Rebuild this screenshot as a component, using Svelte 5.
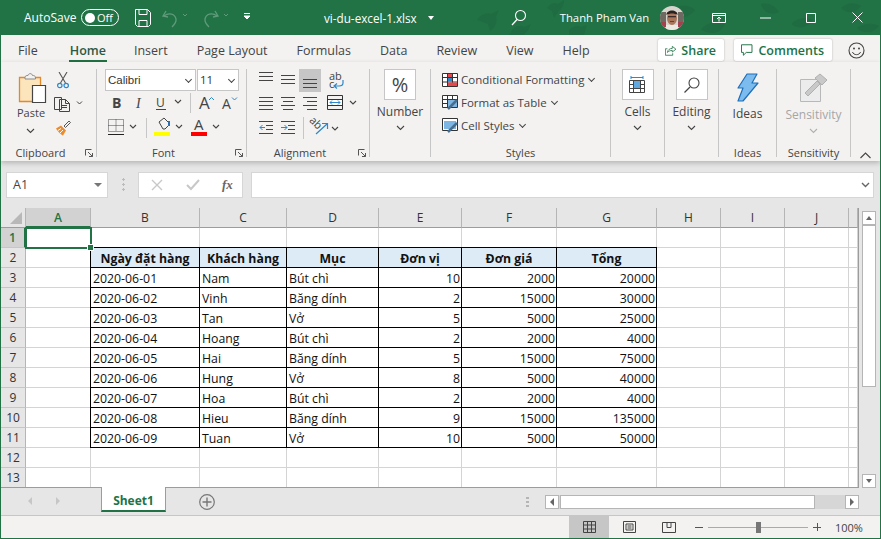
<script>
  const tabs = ['File', 'Home', 'Insert', 'Page Layout', 'Formulas', 'Data', 'Review', 'View', 'Help'];
  const columns = [
    { name: 'A', w: 65 }, { name: 'B', w: 109 }, { name: 'C', w: 87 }, { name: 'D', w: 92 },
    { name: 'E', w: 83 }, { name: 'F', w: 95 }, { name: 'G', w: 100 }, { name: 'H', w: 64 },
    { name: 'I', w: 64 }, { name: 'J', w: 64 }, { name: '', w: 9 }
  ];
  const headings = ['Ngày đặt hàng', 'Khách hàng', 'Mục', 'Đơn vị', 'Đơn giá', 'Tổng'];
  const orders = [
    ['2020-06-01', 'Nam', 'Bút chì', 10, 2000, 20000],
    ['2020-06-02', 'Vinh', 'Băng dính', 2, 15000, 30000],
    ['2020-06-03', 'Tan', 'Vở', 5, 5000, 25000],
    ['2020-06-04', 'Hoang', 'Bút chì', 2, 2000, 4000],
    ['2020-06-05', 'Hai', 'Băng dính', 5, 15000, 75000],
    ['2020-06-06', 'Hung', 'Vở', 8, 5000, 40000],
    ['2020-06-07', 'Hoa', 'Bút chì', 2, 2000, 4000],
    ['2020-06-08', 'Hieu', 'Băng dính', 9, 15000, 135000],
    ['2020-06-09', 'Tuan', 'Vở', 10, 5000, 50000]
  ];
  const gridCols = '25px ' + columns.map((c) => c.w + 'px').join(' ');
  const rows = Array.from({ length: 13 }, (_, i) => i + 1);
  const lines = (ys, x1, x2) => ys.map((y) => `M${x1} ${y}H${x2}`).join('');
</script>

{#snippet caret(x, y)}
  <path d="M{x} {y}l3 3 3-3" fill="none" stroke="#444" stroke-width="1.1" />
{/snippet}

<div class="window">
  <header class="titlebar">
    <svg class="leaves" width="420" height="35" viewBox="0 0 420 35">
      <g fill="#1f6c42">
        <path d="M16 20c4-6 10-8 14-6l8-4-3 7c2 5-2 12-6 14l-2-7z" />
        <path d="M50 32c3-6 9-7 13-5l7-3c-2 5-4 9-8 11H48z" />
        <path d="M86 8c4-5 8-6 11-4l6-4c0 5-2 9-6 12l-4 6-2-7z" />
        <path d="M108 30c4-4 9-5 12-3l6-2-3 10h-15z" />
        <path d="M210 10c8-6 18-6 24 0-6 8-16 10-24 0z" />
        <path d="M240 30c6-8 16-10 24-6-4 8-10 12-24 6z" />
        <path d="M300 4c8-2 14 2 18 8-8 4-16 0-18-8z" />
        <path d="M330 24c6-6 14-8 22-4-6 8-14 10-22 4z" />
        <path d="M380 8c6-6 14-6 20-2-6 8-14 8-20 2z" />
        <path d="M396 28c6-4 14-6 22-2-6 8-16 8-22 2z" />
      </g>
    </svg>
    <span class="autosave">AutoSave</span>
    <span class="toggle"><i></i><b>Off</b></span>
    <svg class="qat" width="120" height="24" viewBox="0 0 120 24">
      <path d="M1.500 3.500h12l3 3v12l-2 2h-11l-2-2zM5 3.500v5h8v-5M5 20.500v-6h8v6" fill="none" stroke="#fff" />
      <path d="M32 5l-3 5 5 1M30 10c5-4 11-2 12 3 .5 3-2 6-4 8" fill="none" stroke="#5f9a7b" stroke-width="1.300" />
      <path d="M49 8l2 2 2-2" fill="none" stroke="#5f9a7b" />
      <path d="M81 5l3 5-5 1M83 10c-5-4-11-2-12 3-.5 3 2 6 4 8" fill="none" stroke="#5f9a7b" stroke-width="1.300" />
      <path d="M90 8l2 2 2-2" fill="none" stroke="#5f9a7b" />
      <path d="M110 7.500h6M110 10l3 3 3-3z" fill="#fff" stroke="#fff" />
    </svg>
    <span class="filename">vi-du-excel-1.xlsx</span>
    <span class="file-caret"></span>
    <svg class="search" width="16" height="18" viewBox="0 0 16 18">
      <circle cx="9.500" cy="6.500" r="5" fill="none" stroke="#fff" stroke-width="1.100" />
      <path d="M6 10.500L1 16" stroke="#fff" stroke-width="1.300" />
    </svg>
    <span class="user">Thanh Pham Van</span>
    <svg class="avatar" width="24" height="24" viewBox="0 0 24 24">
      <defs><clipPath id="round"><circle cx="12" cy="12" r="12" /></clipPath></defs>
      <g clip-path="url(#round)">
        <rect width="24" height="24" fill="#d8d5cf" />
        <rect y="6" x="0" width="6" height="14" fill="#6e6a62" />
        <rect y="6" x="18" width="6" height="14" fill="#6e6a62" />
        <rect x="1" y="16" width="5" height="5" fill="#a5404f" />
        <rect x="18" y="16" width="5" height="5" fill="#a5404f" />
        <rect x="6" y="19" width="12" height="5" fill="#ece8e2" />
        <ellipse cx="12" cy="12" rx="5" ry="7" fill="#a9765c" />
        <path d="M6.500 9c-.5-6 11.500-6 11 0-3-2-8-2-11 0z" fill="#2b2220" />
        <rect x="8" y="10" width="8" height="1.300" fill="#3a2a28" />
        <rect x="10" y="15" width="4" height="1" fill="#6d3d35" />
      </g>
    </svg>
    <svg class="winbtn display" width="14" height="12" viewBox="0 0 14 12">
      <path d="M.5 1.500h13v9H.5zM.5 3.500h13M7 9.500V5M5 7l2-2 2 2" fill="none" stroke="#fff" />
    </svg>
    <svg class="winbtn min" width="11" height="2" viewBox="0 0 11 2"><path d="M0 1h11" stroke="#fff" /></svg>
    <svg class="winbtn max" width="10" height="10" viewBox="0 0 10 10"><path d="M.5.500h9v9h-9z" fill="none" stroke="#fff" /></svg>
    <svg class="winbtn close" width="11" height="11" viewBox="0 0 11 11"><path d="M.5.500l10 10M10.500.500l-10 10" stroke="#fff" /></svg>
  </header>

  <nav class="tabs">
    {#each tabs as tab}
      <span class="tab" class:active={tab === 'Home'}>{tab}</span>
    {/each}
    <span class="tabs-right">
      <button class="pill share">
        <svg width="14" height="14" viewBox="0 0 14 14">
          <path d="M3 5.500H.5v8h9V11M3 10c0-3 3-5 6-5V2.500l4.500 3.500L9 9.500V7.500c-2.500 0-4.500 1-6 2.500z" fill="none" stroke="#217346" />
        </svg>
        Share
      </button>
      <button class="pill comments">
        <svg width="13" height="13" viewBox="0 0 13 13">
          <path d="M.5.500h11v8h-6l-3 3v-3h-2z" fill="none" stroke="#217346" />
        </svg>
        Comments
      </button>
      <svg class="smiley" width="17" height="17" viewBox="0 0 17 17">
        <circle cx="8.500" cy="8.500" r="7.500" fill="none" stroke="#444" stroke-width="1.100" />
        <circle cx="6" cy="6.500" r="1" fill="#444" /><circle cx="11" cy="6.500" r="1" fill="#444" />
        <path d="M4.500 10c1 3.500 7 3.500 8 0" fill="none" stroke="#444" />
      </svg>
    </span>
  </nav>

  <section class="ribbon">
    <div class="group clipboard">
      <div class="body">
        <svg class="paste" width="50" height="56" viewBox="0 0 50 56">
          <path d="M7.500 8.500h21v24h-21z" fill="#fce4bd" stroke="#e3892a" stroke-width="1.300" />
          <path d="M13 8.500c0-2 2-2 3-2 .5-2.500 4-2.500 4.500 0 1 0 3 0 3 2.500v1H13z" fill="#f3f2f1" stroke="#8a8a8a" />
          <path d="M20.500 16.500h13v17h-13z" fill="#fff" stroke="#444" stroke-width="1.200" />
          <text x="5" y="48" class="label">Paste</text>
        </svg>
        <svg class="clip-caret" width="9" height="6" viewBox="0 0 9 6"><path d="M1 1l3.500 3.500L8 1" fill="none" stroke="#444" stroke-width="1.100" /></svg>
        <svg class="scissors" width="12" height="17" viewBox="0 0 12 17">
          <path d="M2 0l6.500 11M10 0L3.500 11" fill="none" stroke="#555" stroke-width="1.100" />
          <circle cx="2.800" cy="13.500" r="2.200" fill="none" stroke="#2d87c9" stroke-width="1.200" />
          <circle cx="9.200" cy="13.500" r="2.200" fill="none" stroke="#2d87c9" stroke-width="1.200" />
        </svg>
        <svg class="copy" width="30" height="16" viewBox="0 0 30 16">
          <path d="M.5 1.500h7v12H.5zM5.500 3.500h6l4 4v8h-10zM11.500 3.500v4h4M8 9.500h5M8 11.500h5" fill="#f3f2f1" stroke="#444" />
          <path d="M23 5.500l2.500 2.500 2.500-2.500" fill="none" stroke="#444" />
        </svg>
        <svg class="painter" width="16" height="16" viewBox="0 0 16 16">
          <path d="M1 8.500l5-3 5 5-3 5c-2-.5-5-4-7-7z" fill="#ee8b2c" />
          <path d="M3 10.500l3-2M5 13l3-3" stroke="#fff" />
          <path d="M9 6l5-5 1.500 1.500-5 5z" fill="#f3f2f1" stroke="#555" />
        </svg>
      </div>
      <span class="group-name boxed">Clipboard</span>
      <svg class="launcher" width="8" height="8" viewBox="0 0 8 8"><path d="M.5 6.500v-6h6M3 3l4.500 4.500M7.500 4v3.500H4" fill="none" stroke="#555" /></svg>
    </div>

    <div class="group font">
      <div class="font-row">
        <span class="select name">Calibri</span>
        <span class="select size">11</span>
      </div>
      <svg class="font-icons" width="136" height="58" viewBox="0 0 136 58">
        <text x="6" y="15" class="bold">B</text>
        <text x="30" y="15" class="italic">I</text>
        <text x="50" y="14" class="plain">U</text>
        <path d="M50 16.500h10" stroke="#444" />
        {@render caret(69, 7)}
        <path d="M84.500 0v20" stroke="#c6c6c6" />
        <text x="93" y="16" class="big">A</text>
        <path d="M103 7l2.500-2.500L108 7" fill="none" stroke="#2d87c9" />
        <text x="116" y="16" class="mid">A</text>
        <path d="M126 4.500l2.500 2.500L131 4.500" fill="none" stroke="#2d87c9" />
        <path d="M2.500 26.500h15v12h-15zM10 26.500v12M2.500 32.500h15" fill="none" stroke="#444" stroke-dasharray="1 1" />
        <path d="M2 41.500h16" stroke="#222" />
        {@render caret(24, 32)}
        <path d="M40.500 25v20" stroke="#c6c6c6" />
        <path d="M53 29l5-4 6 6-5 5h-2z" fill="#f3f2f1" stroke="#444" />
        <path d="M63 28v5" stroke="#2d6fb0" stroke-width="2" />
        <rect x="48" y="39" width="16" height="4" fill="#ffff00" />
        {@render caret(70, 32)}
        <text x="88" y="37" class="plain big-a">A</text>
        <rect x="85" y="39" width="16" height="4" fill="#ff0000" />
        {@render caret(107, 32)}
      </svg>
      <span class="group-name boxed">Font</span>
      <svg class="launcher" width="8" height="8" viewBox="0 0 8 8"><path d="M.5 6.500v-6h6M3 3l4.500 4.500M7.500 4v3.500H4" fill="none" stroke="#555" /></svg>
    </div>

    <div class="group alignment">
      <span class="active-align"></span>
      <svg class="align-icons" width="116" height="70" viewBox="0 0 116 70">
        <path d="{lines([1.500, 5.500, 9.500], 1, 15)}" stroke="#444" fill="none" />
        <path d="{lines([4.500, 8.500, 12.500], 23, 37)}" stroke="#444" />
        <path d="{lines([8.500, 12.500, 16.500], 45, 59)}" stroke="#444" />
        <text x="71" y="9" class="tiny">ab</text>
        <text x="71" y="17" class="tiny">c</text>
        <path d="M85 9v3c0 2-2 3-4 3h-4M79 12.500L76 15l3 2.500" fill="none" stroke="#2d87c9" stroke-width="1.200" />
        <path d="{lines([26.500, 30.500, 34.500, 38.500], 1, 15)}" stroke="#444" />
        <path d="M23 26.500h14M25 30.500h10M23 34.500h14M25 38.500h10M45 26.500h14M49 30.500h10M45 34.500h14M49 38.500h10" stroke="#444" />
        <path d="M69.500 24.500h15v14h-15zM69.500 28.500h15M69.500 34.500h15" fill="none" stroke="#333" />
        <rect x="70" y="29" width="14" height="5" fill="#fff" />
        <path d="M72 31.500h10M74 29.500l-2 2 2 2M80 29.500l2 2-2 2" fill="none" stroke="#2d87c9" />
        {@render caret(92, 30)}
        <path d="M1 50.500h14M8 54.500h7M8 58.500h7M1 62.500h14" fill="none" stroke="#444" />
        <path d="M7 56.500H2M4.500 54l-2.500 2.500L4.500 59" fill="none" stroke="#2d87c9" />
        <path d="M23 50.500h14M30 54.500h7M30 58.500h7M23 62.500h14" stroke="#444" />
        <path d="M23 56.500h6M26.500 54l2.500 2.500-2.500 2.500" fill="none" stroke="#2d87c9" />
        <path d="M45.500 46v22" stroke="#c6c6c6" />
        <text x="52" y="56" class="tiny slant">ab</text>
        <path d="M58 63l11-10M64 52.500h5.500V58" fill="none" stroke="#2d87c9" stroke-width="1.200" />
        {@render caret(74, 56)}
      </svg>
      <span class="group-name boxed">Alignment</span>
      <svg class="launcher" width="8" height="8" viewBox="0 0 8 8"><path d="M.5 6.500v-6h6M3 3l4.500 4.500M7.500 4v3.500H4" fill="none" stroke="#555" /></svg>
    </div>

    <div class="group stack number">
      <span class="box percent">%</span>
      <span class="stack-label">Number</span>
      <svg class="stack-caret" width="9" height="6" viewBox="0 0 9 6"><path d="M1 1l3.500 3.500L8 1" fill="none" stroke="#444" stroke-width="1.100" /></svg>
    </div>

    <div class="group styles">
      <div class="style-row">
        <svg width="16" height="14" viewBox="0 0 16 14">
          <path d="M.5.500h15v13H.5zM5.500.500v13M10.500.500v13M.5 4.500h15M.5 9h15" fill="#fff" stroke="#333" />
          <rect x="6" y="1" width="4" height="3" fill="#e8474c" /><rect x="6" y="5" width="4" height="3.500" fill="#2d87c9" /><rect x="6" y="9.500" width="9" height="3.500" fill="#e8474c" />
        </svg>
        <span>Conditional Formatting</span><i class="chev"></i>
      </div>
      <div class="style-row">
        <svg width="16" height="15" viewBox="0 0 16 15">
          <path d="M.5.500h15v12H.5zM5.500.500v12M10.500.500v12M.5 4.500h15M.5 8.500h15" fill="#fff" stroke="#333" />
          <rect x="6" y="5" width="9" height="7" fill="#7db6e3" />
          <path d="M6 14l9-9" stroke="#4a6d8c" stroke-width="2.500" />
        </svg>
        <span>Format as Table</span><i class="chev"></i>
      </div>
      <div class="style-row">
        <svg width="16" height="15" viewBox="0 0 16 15">
          <path d="M.5.500h15v12H.5z" fill="#fff" stroke="#333" />
          <path d="M2 3h12v8H2z" fill="#7db6e3" />
          <path d="M6 14l9-9" stroke="#4a6d8c" stroke-width="2.500" />
        </svg>
        <span>Cell Styles</span><i class="chev"></i>
      </div>
      <span class="group-name">Styles</span>
    </div>

    <div class="group stack cells">
      <span class="box">
        <svg width="17" height="17" viewBox="0 0 17 17">
          <path d="M2 1.500h12M2 0v3M14 0v3" stroke="#2d87c9" fill="none" />
          <path d="M.5 4.500h15v12H.5zM.5 8.500h15M.5 12.500h15M4.500 4.500v12M11.500 4.500v12" fill="none" stroke="#444" />
          <rect x="5" y="5" width="6" height="7" fill="#5fa8e0" />
        </svg>
      </span>
      <span class="stack-label">Cells</span>
      <svg class="stack-caret" width="9" height="6" viewBox="0 0 9 6"><path d="M1 1l3.500 3.500L8 1" fill="none" stroke="#444" stroke-width="1.100" /></svg>
    </div>

    <div class="group stack editing">
      <span class="box">
        <svg width="16" height="16" viewBox="0 0 16 16">
          <circle cx="10" cy="6" r="5" fill="none" stroke="#444" stroke-width="1.100" />
          <path d="M6 10L.5 15.500" stroke="#444" stroke-width="1.300" />
        </svg>
      </span>
      <span class="stack-label">Editing</span>
      <svg class="stack-caret" width="9" height="6" viewBox="0 0 9 6"><path d="M1 1l3.500 3.500L8 1" fill="none" stroke="#444" stroke-width="1.100" /></svg>
    </div>

    <div class="group stack ideas">
      <svg class="big-icon" width="22" height="29" viewBox="0 0 22 29">
        <path d="M10 1h10l-5 9h6L6 28h-5l5-13H1z" fill="#7cbbed" stroke="#1d6fba" stroke-width="1.200" stroke-linejoin="round" />
      </svg>
      <span class="stack-label">Ideas</span>
      <span class="group-name">Ideas</span>
    </div>

    <div class="group stack sensitivity">
      <svg class="big-icon" width="28" height="30" viewBox="0 0 28 30">
        <path d="M.5 6.500h20v22H.5z" fill="#ececec" stroke="#b8b8b8" />
        <path d="M5 20l12-12 3 3-12 12zM15 5l5-4 7 6-5 5z" fill="#c9c9c9" stroke="#b0b0b0" />
      </svg>
      <span class="stack-label dim">Sensitivity</span>
      <svg class="stack-caret dim-caret" width="9" height="6" viewBox="0 0 9 6"><path d="M1 1l3.500 3.500L8 1" fill="none" stroke="#b0b0b0" stroke-width="1.100" /></svg>
      <span class="group-name">Sensitivity</span>
    </div>

    <svg class="collapse" width="11" height="7" viewBox="0 0 11 7"><path d="M.5 6l5-5 5 5" fill="none" stroke="#444" stroke-width="1.100" /></svg>
  </section>

  <div class="formula">
    <span class="namebox">A1<i></i></span>
    <span class="grip"></span>
    <span class="fx-box">
      <svg width="13" height="12" viewBox="0 0 13 12"><path d="M1 1l10 10M11 1L1 11" stroke="#c8c8c8" stroke-width="1.400" /></svg>
      <svg width="14" height="12" viewBox="0 0 14 12"><path d="M1 6l4 4 8-9" fill="none" stroke="#c8c8c8" stroke-width="2" /></svg>
      <em>fx</em>
    </span>
    <span class="input"><svg width="9" height="6" viewBox="0 0 9 6"><path d="M1 1l3.500 3.500L8 1" fill="none" stroke="#666" stroke-width="1.400" /></svg></span>
  </div>

  <main class="sheet">
    <div class="grid" style="grid-template-columns: {gridCols}">
      <div class="corner"><i></i></div>
      {#each columns as col, i}
        <div class="colhead" class:sel={i === 0}>{col.name}</div>
      {/each}

      {#each rows as row}
        <div class="rowhead" class:sel={row === 1}>{row}</div>
        {#each columns as col, c}
          {@const inTable = c >= 1 && c <= 6 && row >= 2 && row <= 11}
          {@const value = inTable ? (row === 2 ? headings[c - 1] : orders[row - 3][c - 1]) : ''}
          <div
            class="cell"
            class:table={inTable}
            class:head={inTable && row === 2}
            class:num={inTable && row > 2 && c >= 4}
            class:current={c === 0 && row === 1}
          >
            {value}
            {#if c === 0 && row === 1}<b class="handle"></b>{/if}
          </div>
        {/each}
      {/each}
    </div>
    <div class="vscroll">
      <span class="arrow"><i class="up"></i></span>
      <span class="thumb"></span>
      <span class="arrow"><i class="down"></i></span>
    </div>
  </main>

  <div class="sheetbar">
    <span class="nav"><i class="left"></i><i class="right"></i></span>
    <span class="sheet-tab">Sheet1</span>
    <svg class="add" width="16" height="16" viewBox="0 0 16 16">
      <circle cx="8" cy="8" r="7.300" fill="none" stroke="#777" stroke-width="1.200" />
      <path d="M8 3.500v9M3.500 8h9" stroke="#777" stroke-width="1.400" />
    </svg>
    <span class="dots"></span>
    <div class="hscroll">
      <span class="arrow"><i class="left dark"></i></span>
      <span class="hthumb"></span>
      <span class="arrow"><i class="right dark"></i></span>
    </div>
  </div>

  <footer class="status">
    <span class="view on">
      <svg width="13" height="12" viewBox="0 0 13 12"><path d="M.5.500h12v11H.5zM4.500.500v11M8.500.500v11M.5 4h12M.5 8h12" fill="none" stroke="#444" /></svg>
    </span>
    <span class="view">
      <svg width="13" height="12" viewBox="0 0 13 12"><path d="M.5.500h12v11H.5zM3 3h7v6H3zM4.500 5h4M4.500 7h4" fill="none" stroke="#444" /></svg>
    </span>
    <span class="view">
      <svg width="14" height="11" viewBox="0 0 14 11"><path d="M.5.500h13v10H.5zM5 .5v5h4v-5" fill="none" stroke="#444" /></svg>
    </span>
    <span class="zoom">
      <span class="minus"></span>
      <span class="slider"><i></i></span>
      <span class="plus"></span>
    </span>
    <span class="pct">100%</span>
  </footer>
</div>

<style>
  :global(body) {
    margin: 0;
    background: #e6e6e6;
  }

  .window {
    width: 881px;
    height: 539px;
    box-sizing: border-box;
    border: solid #217346;
    border-width: 0 1px 1px 1px;
    display: flex;
    flex-direction: column;
    overflow: hidden;
    font-family: "Open Sans", "Liberation Sans", sans-serif;
    color: #444;
    background: #e6e6e6;
  }

  /* title bar */
  .titlebar {
    height: 35px;
    flex: none;
    margin: 0 -1px;
    background: #217346;
    color: #fff;
    display: flex;
    align-items: center;
    font-size: 12px;
    position: relative;
  }
  .titlebar > :not(.leaves) {
    position: relative;
  }
  .leaves {
    position: absolute;
    right: 0;
    top: 0;
    width: 420px;
  }
  .autosave {
    margin-left: 24px;
    width: 57px;
  }
  .toggle {
    height: 15px;
    border: 1px solid #fff;
    border-radius: 9px;
    display: flex;
    align-items: center;
    justify-content: space-between;
    padding: 0 5px 0 3px;
    box-sizing: content-box;
    width: 28px;
  }
  .toggle i {
    width: 10px;
    height: 10px;
    border-radius: 50%;
    background: #fff;
  }
  .toggle b {
    font-weight: 400;
    font-size: 11px;
  }
  .qat {
    margin-left: 15px;
    width: 120px;
  }
  .filename {
    margin-left: 70px;
    font-size: 11.700px;
  }
  .file-caret {
    margin-left: 11px;
    border: 3px solid transparent;
    border-top: 4px solid #fff;
    border-bottom: 0;
  }
  .search {
    margin-left: 77px;
  }
  .user {
    margin-left: 33px;
    font-size: 11.300px;
  }
  .avatar {
    margin-left: 11px;
  }
  .display {
    margin-left: 28px;
  }
  .min {
    margin-left: 34px;
  }
  .max {
    margin-left: 35px;
  }
  .close {
    margin-left: 36px;
  }

  /* tab strip */
  .tabs {
    height: 27px;
    flex: none;
    background: #f3f2f1;
    display: flex;
    align-items: stretch;
    font-size: 12.500px;
    padding-left: 17px;
    gap: 29px;
  }
  .tab {
    line-height: 31px;
    height: 27px;
    box-sizing: border-box;
    white-space: nowrap;
  }
  .tab.active {
    font-weight: 600;
    border-bottom: 2px solid #217346;
    margin: 0 -2px 0 2px;
    padding: 0 1px;
    color: #2b5a44;
  }
  .tabs-right {
    margin-left: auto;
    display: flex;
    align-items: center;
    padding-right: 15px;
    padding-top: 3px;
  }
  .pill {
    height: 22px;
    border: 0;
    border-radius: 2px;
    background: #fff;
    box-shadow: 0 0 2px rgba(0, 0, 0, 0.3);
    color: #217346;
    font: 600 12.500px "Open Sans", sans-serif;
    display: flex;
    align-items: center;
    gap: 5px;
    padding: 0 8px 0 7px;
  }
  .share {
    width: 66px;
  }
  .comments {
    width: 98px;
    margin-left: 10px;
  }
  .smiley {
    margin-left: 16px;
  }

  /* ribbon */
  .ribbon {
    height: 99px;
    flex: none;
    background: #f3f2f1;
    display: flex;
    box-shadow: 0 2px 5px rgba(0, 0, 0, 0.22);
    position: relative;
    padding-top: 7px;
    box-sizing: border-box;
  }
  .group {
    position: relative;
    box-sizing: border-box;
    height: 88px;
    border-right: 1px solid #c6c6c6;
    flex: none;
  }
  .group-name {
    position: absolute;
    left: 0;
    right: 0;
    top: 77px;
    text-align: center;
    font-size: 11px;
    line-height: 14px;
  }
  .group-name.boxed {
    right: 16px;
  }
  .launcher {
    position: absolute;
    right: 3px;
    top: 80px;
  }
  .label {
    font: 11px "Open Sans", sans-serif;
    fill: #444;
  }

  .clipboard {
    width: 96px;
  }
  .clipboard .body {
    position: relative;
    height: 76px;
  }
  .clipboard .body > svg {
    position: absolute;
  }
  .clipboard .body > .paste {
    left: 11px;
    top: 0;
  }
  .clip-caret {
    left: 25px;
    top: 59px;
  }
  .scissors {
    left: 56px;
    top: 3px;
  }
  .copy {
    left: 53px;
    top: 27px;
  }
  .painter {
    left: 54px;
    top: 51px;
  }

  .font {
    width: 150px;
    padding: 0 0 0 8px;
  }
  .font-row {
    display: flex;
    gap: 1px;
    height: 22px;
  }
  .select {
    box-sizing: border-box;
    height: 22px;
    border: 1px solid #c6c6c6;
    background: #fff;
    font: 11.500px/20px "Open Sans", sans-serif;
    color: #333;
    padding-left: 2px;
    position: relative;
  }
  .select::after {
    content: "";
    position: absolute;
    right: 4px;
    top: 7px;
    width: 4px;
    height: 4px;
    border: solid #444;
    border-width: 0 1px 1px 0;
    transform: rotate(45deg);
  }
  .select.name {
    width: 91px;
    font-family: "Liberation Sans", sans-serif;
  }
  .select.size {
    width: 42px;
  }
  .font-icons {
    display: block;
    margin: 2px 0 0 1px;
    overflow: visible;
  }
  .bold {
    font: 700 14px "Open Sans", sans-serif;
    fill: #444;
  }
  .italic {
    font: italic 14px "Liberation Serif", serif;
    fill: #444;
  }
  .plain {
    font: 12px "Open Sans", sans-serif;
    fill: #444;
  }
  .big {
    font: 17px "Open Sans", sans-serif;
    fill: #444;
  }
  .mid {
    font: 14px "Open Sans", sans-serif;
    fill: #444;
  }
  .big-a {
    font-size: 15px;
  }

  .alignment {
    width: 123px;
  }
  .active-align {
    position: absolute;
    left: 52px;
    top: 0;
    width: 22px;
    height: 23px;
    background: #c6c6c6;
  }
  .align-icons {
    position: absolute;
    left: 11px;
    top: 2px;
    overflow: visible;
  }
  .tiny {
    font: 11px "Open Sans", sans-serif;
    fill: #444;
  }
  .slant {
    transform-box: fill-box;
    transform-origin: center;
    transform: rotate(45deg);
  }

  .stack {
    display: flex;
    flex-direction: column;
    align-items: center;
  }
  .box {
    width: 32px;
    height: 31px;
    box-sizing: border-box;
    border: 1px solid #c6c6c6;
    background: #fff;
    display: flex;
    align-items: center;
    justify-content: center;
    flex: none;
  }
  .percent {
    font-size: 20px;
    color: #444;
  }
  .stack-label {
    font-size: 12px;
    line-height: 16px;
    margin-top: 4px;
  }
  .stack-caret {
    margin-top: 5px;
  }
  .number {
    width: 61px;
  }
  .cells {
    width: 54px;
  }
  .editing {
    width: 54px;
  }
  .ideas {
    width: 58px;
  }
  .ideas .stack-label,
  .sensitivity .stack-label {
    margin-top: 4px;
  }
  .big-icon {
    margin-top: 4px;
    flex: none;
  }
  .sensitivity {
    width: 74px;
  }
  .dim {
    color: #a6a6a6;
  }
  .dim-caret {
    margin-top: 5px;
  }

  .styles {
    width: 180px;
    padding: 0 0 0 11px;
    display: flex;
    flex-direction: column;
    gap: 2px;
  }
  .style-row {
    display: flex;
    align-items: center;
    height: 21px;
    font-size: 11.500px;
    white-space: nowrap;
  }
  .style-row svg {
    flex: none;
    margin-right: 3px;
  }
  .chev {
    width: 4px;
    height: 4px;
    margin: -2px 0 0 5px;
    border: solid #444;
    border-width: 0 1px 1px 0;
    transform: rotate(45deg);
  }
  .collapse {
    position: absolute;
    right: 9px;
    top: 90px;
  }

  /* formula bar */
  .formula {
    height: 26px;
    flex: none;
    margin-top: 11px;
    display: flex;
    padding-left: 5px;
    padding-right: 6px;
  }
  .namebox {
    width: 102px;
    box-sizing: border-box;
    background: #fff;
    border: 1px solid #d6d6d6;
    font-size: 12.500px;
    line-height: 24px;
    padding-left: 6px;
    position: relative;
  }
  .namebox i {
    position: absolute;
    right: 5px;
    top: 10px;
    border: 4px solid transparent;
    border-top: 4px solid #777;
    border-bottom: 0;
  }
  .grip {
    width: 30px;
    background: radial-gradient(circle, #bbb 1.100px, transparent 1.300px) 14px 5px / 3px 5px repeat-y;
    background-clip: content-box;
    padding: 5px 0;
    box-sizing: border-box;
  }
  .fx-box {
    width: 105px;
    box-sizing: border-box;
    background: #fff;
    border: 1px solid #d6d6d6;
    display: flex;
    align-items: center;
    gap: 22px;
    padding-left: 12px;
  }
  .fx-box em {
    font: italic 700 13px "Liberation Serif", serif;
    color: #666;
  }
  .input {
    flex: 1;
    margin-left: 8px;
    box-sizing: border-box;
    background: #fff;
    border: 1px solid #d6d6d6;
    display: flex;
    align-items: center;
    justify-content: flex-end;
    padding-right: 3px;
  }

  /* sheet */
  .sheet {
    flex: none;
    height: 280px;
    margin-top: 10px;
    display: flex;
    background: #e6e6e6;
    position: relative;
  }
  .grid {
    display: grid;
    grid-template-rows: 20px repeat(13, 20px);
    width: 858px;
    box-sizing: border-box;
    background: linear-gradient(#e6e6e6 20px, #fff 20px);
    border-right: 1px solid #9c9c9c;
    border-bottom: 1px solid #9c9c9c;
    overflow: hidden;
    font: 12.300px "Open Sans", sans-serif;
  }
  .corner {
    background: #e6e6e6;
    border-right: 1px solid #b5b5b5;
    border-bottom: 1px solid #9c9c9c;
    position: relative;
  }
  .corner i {
    position: absolute;
    right: 3px;
    bottom: 3px;
    border: 6px solid #b8b8b8;
    border-top-color: transparent;
    border-left-color: transparent;
  }
  .colhead {
    background: #e6e6e6;
    border-right: 1px solid #b5b5b5;
    border-bottom: 1px solid #9c9c9c;
    display: flex;
    align-items: center;
    justify-content: center;
    font: 12px "Open Sans", sans-serif;
    color: #333;
    box-sizing: border-box;
  }
  .colhead.sel {
    background: #d2d2d2;
    color: #217346;
    font-weight: 600;
    border-bottom: 2px solid #217346;
  }
  .rowhead {
    background: #e6e6e6;
    border-right: 1px solid #b5b5b5;
    border-bottom: 1px solid #c6c6c6;
    display: flex;
    align-items: center;
    justify-content: center;
    font: 12px "Open Sans", sans-serif;
    color: #333;
    box-sizing: border-box;
  }
  .rowhead.sel {
    background: #d2d2d2;
    color: #217346;
    font-weight: 600;
    border-right: 2px solid #217346;
  }
  .cell {
    box-sizing: border-box;
    border-right: 1px solid #d4d4d4;
    border-bottom: 1px solid #d4d4d4;
    line-height: 21px;
    padding: 0 1px 0 2px;
    color: #111;
    white-space: nowrap;
    position: relative;
    min-width: 0;
  }
  .cell.table {
    border-right-color: #000;
    border-bottom-color: #000;
  }
  .cell.head {
    background: #ddebf7;
    font-weight: 700;
    text-align: center;
    padding: 0;
    box-shadow: 0 -1px 0 #000;
  }
  .cell.num {
    text-align: right;
  }
  .cell.current {
    outline: 2px solid #217346;
    outline-offset: -1px;
    z-index: 2;
    overflow: visible;
  }
  .handle {
    position: absolute;
    right: -4px;
    bottom: -4px;
    width: 5px;
    height: 5px;
    background: #217346;
    border: 1px solid #fff;
    z-index: 3;
  }
  /* left edge of the bordered table */
  .cell:nth-child(12n + 3).table {
    box-shadow: -1px 0 0 #000;
  }
  .cell:nth-child(12n + 3).head {
    box-shadow: -1px 0 0 #000, 0 -1px 0 #000;
  }
  .vscroll {
    width: 14px;
    margin-left: 3px;
    margin-top: 3px;
    display: flex;
    flex-direction: column;
  }
  .arrow {
    flex: none;
    width: 14px;
    height: 14px;
    box-sizing: border-box;
    background: #fff;
    border: 1px solid #b5b5b5;
    display: flex;
    align-items: center;
    justify-content: center;
  }
  .arrow .up,
  .arrow .down {
    border: 3px solid transparent;
  }
  .arrow .up {
    border-top: 0;
    border-bottom: 4px solid #666;
  }
  .arrow .down {
    border-bottom: 0;
    border-top: 4px solid #666;
  }
  .thumb {
    height: 162px;
    box-sizing: border-box;
    background: #fff;
    border: 1px solid #b5b5b5;
    margin-bottom: auto;
  }

  .sheetbar {
    height: 28px;
    flex: none;
    display: flex;
    align-items: flex-start;
    background: #e6e6e6;
    border-bottom: 1px solid #c6c6c6;
    box-sizing: border-box;
  }
  .nav {
    width: 100px;
    display: flex;
    gap: 24px;
    padding: 9px 0 0 27px;
    box-sizing: border-box;
  }
  .left,
  .right {
    display: block;
    border: 4px solid transparent;
    width: 0;
    height: 0;
  }
  .left {
    border-left: 0;
    border-right: 4px solid #c6c6c6;
  }
  .right {
    border-right: 0;
    border-left: 4px solid #c6c6c6;
  }
  .left.dark {
    border-right-color: #666;
  }
  .right.dark {
    border-left-color: #666;
  }
  .sheet-tab {
    width: 65px;
    height: 25px;
    margin-top: -1px;
    box-sizing: border-box;
    background: #fff;
    border: solid #9c9c9c;
    border-width: 0 1px;
    border-bottom: 2px solid #217346;
    color: #217346;
    font-weight: 700;
    font-size: 12px;
    line-height: 28px;
    text-align: center;
    z-index: 1;
  }
  .add {
    margin: 6px 0 0 33px;
  }
  .dots {
    width: 3px;
    height: 11px;
    margin: 8px 0 0 311px;
    background: radial-gradient(circle, #b5b5b5 1.200px, transparent 1.400px) 0 0 / 3px 4px;
  }
  .hscroll {
    margin: 7px 0 0 16px;
    width: 314px;
    display: flex;
    background: #d6d6d6;
  }
  .hthumb {
    width: 255px;
    height: 14px;
    margin-left: 1px;
    box-sizing: border-box;
    background: #fff;
    border: 1px solid #b5b5b5;
    margin-right: auto;
  }

  .status {
    flex: 1;
    background: #f3f2f1;
    display: flex;
    align-items: center;
    padding-left: 568px;
  }
  .view {
    width: 40px;
    height: 100%;
    display: flex;
    align-items: center;
    justify-content: center;
  }
  .view.on {
    background: #c6c6c6;
  }
  .zoom {
    margin-left: 6px;
    display: flex;
    align-items: center;
  }
  .minus {
    width: 8px;
    height: 1px;
    background: #555;
  }
  .slider {
    width: 100px;
    height: 1px;
    background: #aaa;
    margin: 0 5px;
    position: relative;
  }
  .slider i {
    position: absolute;
    left: 48px;
    top: -5px;
    width: 5px;
    height: 11px;
    background: #777;
  }
  .plus {
    width: 8px;
    height: 8px;
    background:
      linear-gradient(#555, #555) center / 100% 1px no-repeat,
      linear-gradient(#555, #555) center / 1px 100% no-repeat;
  }
  .pct {
    margin-left: 14px;
    font-size: 11px;
  }
</style>
